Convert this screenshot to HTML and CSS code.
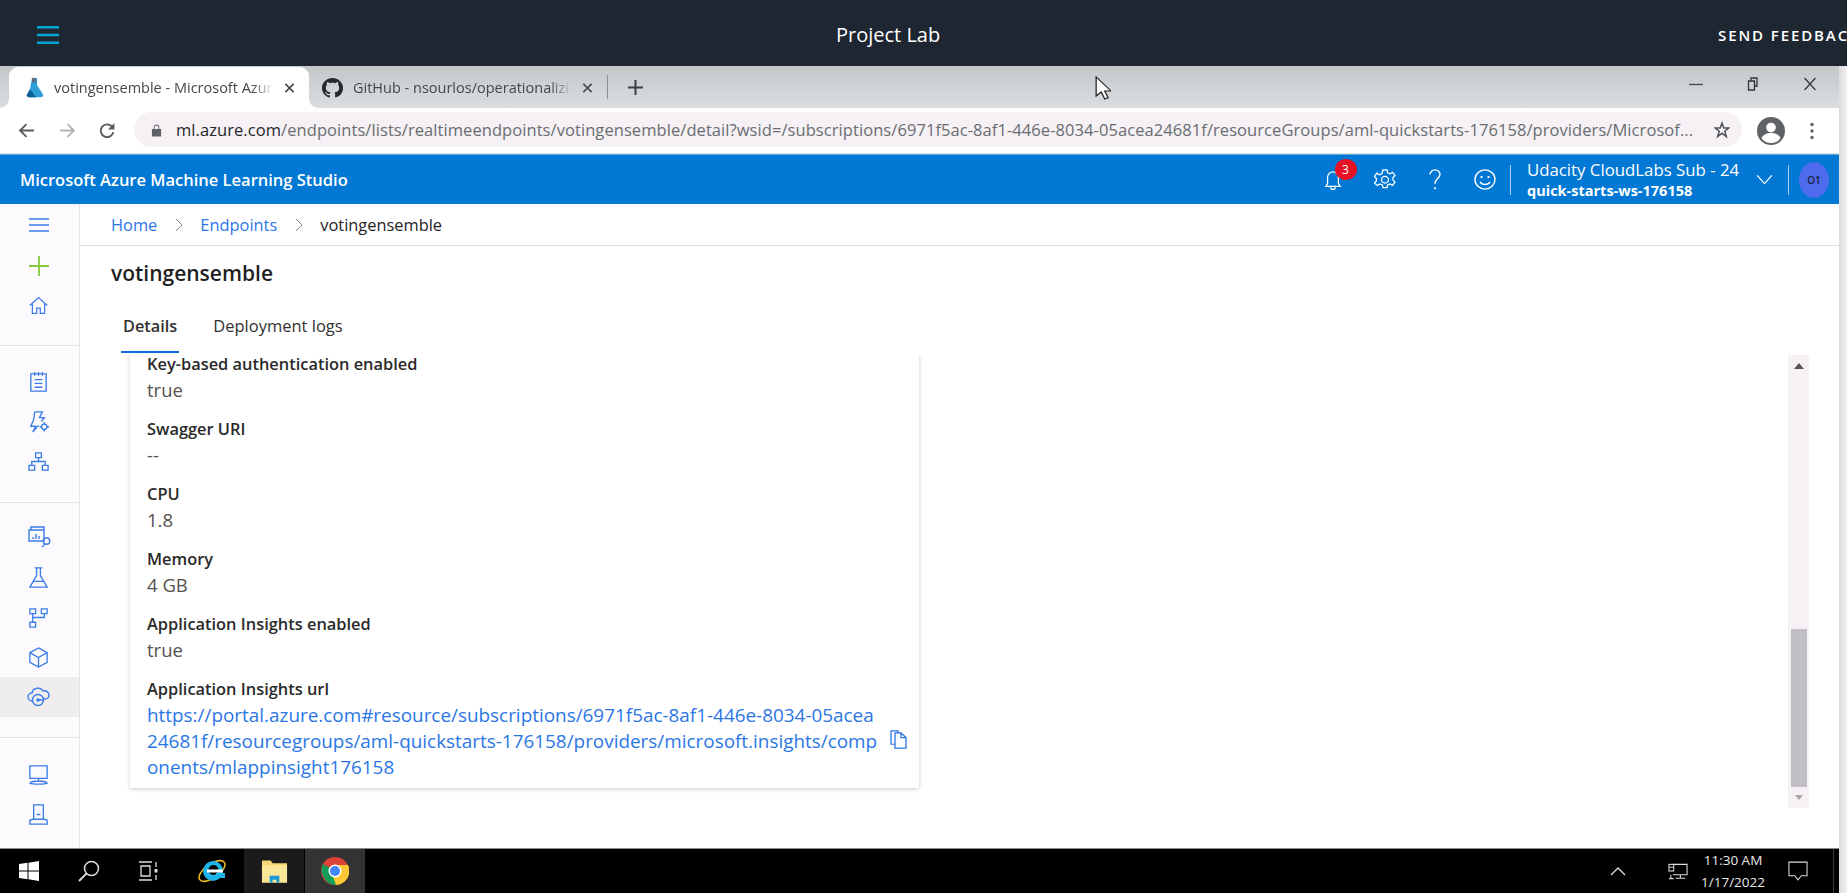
FILE: index.html
```html
<!DOCTYPE html>
<html lang="en">
<head>
<meta charset="utf-8">
<title>Project Lab</title>
<link rel="stylesheet" href="styles.css">
</head>
<body>
<div class="lab-bar">
  <svg class="lab-menu" viewBox="0 0 22 18" width="22" height="18"><path d="M0 1.2h22M0 9h22M0 16.800h22" stroke="#00a3d3" stroke-width="2.400" fill="none"/></svg>
  <div class="lab-title">Project Lab</div>
  <div class="lab-feedback">SEND FEEDBACK</div>
</div>
<div class="desk">
  <div class="screen">
    <div class="tabstrip">
      <div class="tab tab-active">
        <svg class="tab-icon" viewBox="0 0 20 24" width="20" height="21" preserveAspectRatio="none"><path d="M7 1h5v8l6 11a2 2 0 0 1-2 3H4a2 2 0 0 1-2-3l3-6z" fill="#2f9fd8"/><path d="M2 20l3-6 6 9H4a2 2 0 0 1-2-3z" fill="#0b5e96"/><path d="M7 1h4v5H7z" fill="#5a6f82"/></svg>
        <span class="tab-text">votingensemble - Microsoft Azure Machine</span>
        <svg class="tab-x" viewBox="0 0 12 12" width="11" height="12"><path d="M1.500 1.500l9 9M10.500 1.500l-9 9" stroke="#4a4d50" stroke-width="1.800"/></svg>
      </div>
      <div class="tab tab-second">
        <svg class="tab-icon" viewBox="0 0 16 16" width="21" height="20" preserveAspectRatio="none"><path fill="#24292e" d="M8 0C3.58 0 0 3.58 0 8c0 3.54 2.29 6.53 5.47 7.59.4.07.55-.17.55-.38 0-.19-.01-.82-.01-1.49-2.01.37-2.53-.49-2.69-.94-.09-.23-.48-.94-.82-1.13-.28-.15-.68-.52-.01-.53.63-.01 1.08.58 1.23.82.72 1.21 1.87.87 2.33.66.07-.52.28-.87.51-1.07-1.78-.2-3.64-.89-3.64-3.95 0-.87.31-1.59.82-2.15-.08-.2-.36-1.02.08-2.12 0 0 .67-.21 2.2.82.64-.18 1.32-.27 2-.27.68 0 1.36.09 2 .27 1.53-1.04 2.2-.82 2.2-.82.44 1.1.16 1.92.08 2.12.51.56.82 1.27.82 2.15 0 3.07-1.87 3.75-3.65 3.95.29.25.54.73.54 1.48 0 1.07-.01 1.93-.01 2.2 0 .21.15.46.55.38A8.013 8.013 0 0016 8c0-4.42-3.58-8-8-8z"/></svg>
        <span class="tab-text">GitHub - nsourlos/operationalizing-machine</span>
        <svg class="tab-x" viewBox="0 0 12 12" width="11" height="12"><path d="M1.500 1.500l9 9M10.500 1.500l-9 9" stroke="#4a4d50" stroke-width="1.800"/></svg>
      </div>
      <div class="tab-sep"></div>
      <svg class="tab-new" viewBox="0 0 14 14" width="15" height="15"><path d="M7 0v14M0 7h14" stroke="#3c4043" stroke-width="1.900"/></svg>
      <div class="win-controls">
        <svg viewBox="0 0 14 12" width="14" height="12"><path d="M0 6.500h14" stroke="#444" stroke-width="1.300"/></svg>
        <svg viewBox="0 0 12 14" width="12" height="14"><path d="M1.500 4h6v9h-6zM4 4V1h6v8H7.500" stroke="#333" stroke-width="1.300" fill="none"/></svg>
        <svg viewBox="0 0 14 14" width="14" height="14"><path d="M1.500 1l11 12M12.500 1l-11 12" stroke="#333" stroke-width="1.200"/></svg>
      </div>
    </div>
    <div class="toolbar">
      <svg class="nav-btn nav-back" viewBox="0 0 16 16" width="17" height="17"><path d="M15 8H2M8 2L2 8l6 6" stroke="#5a5d60" stroke-width="1.800" fill="none"/></svg>
      <svg class="nav-btn nav-fwd" viewBox="0 0 16 16" width="17" height="17"><path d="M1 8h13M8 2l6 6-6 6" stroke="#b1b3b6" stroke-width="1.800" fill="none"/></svg>
      <svg class="nav-btn nav-reload" viewBox="0 0 16 16" width="17" height="17"><path d="M13.500 9.500a6 6 0 1 1-1.600-5.500" stroke="#5a5d60" stroke-width="1.800" fill="none"/><path d="M14.500 1v6h-6z" fill="#5a5d60"/></svg>
      <div class="omnibox">
        <svg class="lock" viewBox="0 0 12 14" width="11" height="14"><path d="M1 6h10v8H1zM3 6V4a3 3 0 0 1 6 0v2" fill="#5f6368"/><path d="M4 6V4a2 2 0 0 1 4 0v2z" fill="#f5f1f5"/></svg>
        <span class="url"><b>ml.azure.com</b>/endpoints/lists/realtimeendpoints/votingensemble/detail?wsid=/subscriptions/6971f5ac-8af1-446e-8034-05acea24681f/resourceGroups/aml-quickstarts-176158/providers/Microsof...</span>
        <svg class="star" viewBox="0 0 16 18" width="16" height="18"><path d="M8 2l1.800 5h5l-4 3.200 1.500 5.300L8 12.300l-4.300 3.200 1.500-5.300-4-3.200h5z" stroke="#4f5255" stroke-width="1.500" fill="none"/></svg>
      </div>
      <svg class="profile" viewBox="0 0 28 28" width="28" height="28"><circle cx="14" cy="14" r="14" fill="#5f6368"/><circle cx="14" cy="10.500" r="4.800" fill="#fff"/><path d="M4.500 21c2-4 6-5 9.500-5s7.500 1 9.500 5c-2 3.500-5.500 5-9.500 5s-7.500-1.500-9.500-5z" fill="#fff"/></svg>
      <svg class="dots" viewBox="0 0 4 18" width="4" height="18"><circle cx="2" cy="2.500" r="1.700" fill="#5f6368"/><circle cx="2" cy="9" r="1.700" fill="#5f6368"/><circle cx="2" cy="15.500" r="1.700" fill="#5f6368"/></svg>
    </div>
    <header class="az-header">
      <div class="az-title">Microsoft Azure Machine Learning Studio</div>
      <div class="az-actions">
        <div class="bell">
          <svg viewBox="0 0 20 24" width="18" height="22"><path d="M10 3a6 6 0 0 0-6 6v7l-2 3h16l-2-3V9a6 6 0 0 0-6-6zM7.500 20a2.500 2.500 0 0 0 5 0" stroke="#fff" stroke-width="1.400" fill="none"/></svg>
          <span class="badge">3</span>
        </div>
        <svg class="gear" viewBox="1 1 22 22" width="22" height="21" preserveAspectRatio="none"><path d="M10 2h4l.6 3 2.400 1 2.600-1.600 2.400 3.400-2 2.200v2.600l2 2.200-2.400 3.400-2.600-1.600-2.400 1-.6 3h-4l-.6-3-2.400-1-2.600 1.600L1.400 15.800l2-2.200V11l-2-2.200L3.800 5.400 6.400 7l2.400-1z" stroke="#fff" stroke-width="1.300" fill="none"/><circle cx="12" cy="12.300" r="3.500" stroke="#fff" stroke-width="1.300" fill="none"/></svg>
        <svg class="help" viewBox="0 0 14 26" width="14" height="24" preserveAspectRatio="none"><path d="M2 7a5 5 0 0 1 10 0c0 4-5 4.500-5 10" stroke="#fff" stroke-width="1.400" fill="none"/><circle cx="7" cy="22" r="1.100" fill="#fff"/></svg>
        <svg class="smile" viewBox="1 1 22 22" width="22" height="21" preserveAspectRatio="none"><circle cx="12" cy="12" r="10" stroke="#fff" stroke-width="1.400" fill="none"/><circle cx="8.500" cy="9.500" r="1.200" fill="#fff"/><circle cx="15.500" cy="9.500" r="1.200" fill="#fff"/><path d="M7 14.500c2 3.500 8 3.500 10 0" stroke="#fff" stroke-width="1.400" fill="none"/></svg>
        <div class="az-sep"></div>
        <div class="account">
          <div class="account-sub">Udacity CloudLabs Sub - 24</div>
          <div class="account-ws">quick-starts-ws-176158</div>
        </div>
        <svg class="chev" viewBox="0 0 18 12" width="17" height="11"><path d="M1 1.500l8 9 8-9" stroke="#fff" stroke-width="1.400" fill="none"/></svg>
        <div class="az-sep az-sep-2"></div>
        <div class="avatar">O1</div>
      </div>
    </header>
    <div class="main">
      <nav class="sidebar">
        <div class="side-group side-group-1">
          <div class="side-item"><svg viewBox="0 0 24 24" width="24" height="24"><path d="M2 6h20M2 12h20M2 18h20" class="ic"/></svg></div>
          <div class="side-item"><svg viewBox="0 0 24 24" width="24" height="24"><path d="M12 2v20M2 12h20" fill="none" stroke="#86c83c" stroke-width="1.800"/></svg></div>
          <div class="side-item"><svg class="side-home" viewBox="0 0 24 24" width="21" height="21"><path d="M2 12l10-9 10 9M5 10v11h5v-6h4v6h5V10" class="ic"/></svg></div>
        </div>
        <div class="side-group side-group-2">
          <div class="side-item"><svg viewBox="0 0 24 24" width="23" height="23"><path d="M4 4h16v18H4zM8 2v4M12 2v4M16 2v4M8 10h8M8 14h8M8 18h8" class="ic"/></svg></div>
          <div class="side-item"><svg viewBox="0 0 24 24" width="23" height="23"><path d="M8 2h8l-3 6h5l-3 4M7 10l-3 7h5l-3 6 6-7M8 2l-1 8" class="ic"/><circle cx="18" cy="17.500" r="2.800" class="ic"/><path d="M18 12.500v2M18 20.500v2M13 17.500h2M21 17.500h2" class="ic"/></svg></div>
          <div class="side-item"><svg viewBox="0 0 24 24" width="23" height="23"><path d="M9 3h6v5H9zM2 16h6v5H2zM16 16h6v5h-6zM12 8v4M5 16v-4h14v4" class="ic"/></svg></div>
        </div>
        <div class="side-group side-group-3">
          <div class="side-item"><svg viewBox="0 0 24 24" width="24" height="24"><path d="M4 5V2h13v3M2 5h15v11H2zM6 12v2M9 9v5M12 11v3M15 22l3-3" class="ic"/><circle cx="19.500" cy="16" r="3.200" class="ic"/></svg></div>
          <div class="side-item"><svg viewBox="0 0 24 24" width="23" height="23"><path d="M8 2h8M10 2v8L3 22h18L14 10V2M6 16h12" class="ic"/></svg></div>
          <div class="side-item"><svg viewBox="0 0 24 24" width="23" height="23"><path d="M3 3h6v5H3zM15 3h6v5h-6zM3 17h6v5H3zM6 8v9M6 12h12V8" class="ic"/></svg></div>
          <div class="side-item"><svg viewBox="0 0 24 24" width="23" height="23"><path d="M12 2l9 5v10l-9 5-9-5V7zM3 7l9 5 9-5M12 12v10" class="ic"/></svg></div>
          <div class="side-item side-item-active"><svg viewBox="0 0 24 24" width="24" height="24"><path d="M6 16H5a4 4 0 0 1 0-8 6 6 0 0 1 11-2 4.500 4.500 0 0 1 6 4.500 4 4 0 0 1-4 3.500h-1" class="ic"/><circle cx="11" cy="15" r="5.500" class="ic"/><circle cx="11" cy="15" r="1.800" fill="#3a7de8"/><path d="M11 15h5" class="ic"/></svg></div>
        </div>
        <div class="side-group side-group-4">
          <div class="side-item"><svg viewBox="0 0 24 24" width="23" height="23"><path d="M3 3h18v13H3zM12 16v3M3 21c3-3 15-3 18 0-3 1.500-15 1.500-18 0z" class="ic"/></svg></div>
          <div class="side-item"><svg viewBox="0 0 24 24" width="23" height="23"><path d="M7 2h10v15H7zM10 12h4M3 22v-4l3-1h12l3 1v4z" class="ic"/></svg></div>
        </div>
      </nav>
      <main class="content">
        <div class="crumbs">
          <a class="crumb-link">Home</a>
          <svg class="crumb-chev" viewBox="0 0 8 14" width="8" height="14"><path d="M1 1l6 6-6 6" stroke="#8a8a8a" stroke-width="1" fill="none"/></svg>
          <a class="crumb-link">Endpoints</a>
          <svg class="crumb-chev" viewBox="0 0 8 14" width="8" height="14"><path d="M1 1l6 6-6 6" stroke="#8a8a8a" stroke-width="1" fill="none"/></svg>
          <span class="crumb-current">votingensemble</span>
        </div>
        <h1 class="page-title">votingensemble</h1>
        <div class="tabs">
          <div class="tabs-item tabs-item-active">Details</div>
          <div class="tabs-item">Deployment logs</div>
        </div>
        <div class="scroller">
          <div class="scroll-body">
            <section class="card">
              <div class="field"><div class="label">Key-based authentication enabled</div><div class="value">true</div></div>
              <div class="field"><div class="label">Swagger URI</div><div class="value">--</div></div>
              <div class="field"><div class="label">CPU</div><div class="value">1.8</div></div>
              <div class="field"><div class="label">Memory</div><div class="value">4 GB</div></div>
              <div class="field"><div class="label">Application Insights enabled</div><div class="value">true</div></div>
              <div class="field field-last"><div class="label">Application Insights url</div>
                <div class="link-row">
                  <a class="link">https://portal.azure.com#resource/subscriptions/6971f5ac-8af1-446e-8034-05acea<br>24681f/resourcegroups/aml-quickstarts-176158/providers/microsoft.insights/comp<br>onents/mlappinsight176158</a>
                  <svg class="copy" viewBox="0 0 18 20" width="18" height="19" preserveAspectRatio="none"><path d="M6 3h6l5 5v11H6zM12 3v5h5M6 15H2V1h7v2" stroke="#2b76e5" stroke-width="1.300" fill="none"/></svg>
                </div>
              </div>
            </section>
          </div>
          <div class="scrollbar">
            <div class="arrow-up"></div>
            <div class="thumb"></div>
            <div class="arrow-down"></div>
          </div>
        </div>
      </main>
    </div>
    <footer class="taskbar">
      <div class="task-cell task-win">
        <svg viewBox="0 0 20 20" width="20" height="20"><path d="M0 3l8.500-1.200V9.500H0zM9.500 1.700L20 0v9.500H9.500zM0 10.500h8.500v7.700L0 17zM9.500 10.500H20V20L9.500 18.300z" fill="#fff"/></svg>
      </div>
      <div class="task-cell task-search">
        <svg viewBox="0 0 22 22" width="22" height="22"><circle cx="13.500" cy="8.500" r="7" stroke="#ddd" stroke-width="1.500" fill="none"/><path d="M8.500 13.500L1 21" stroke="#ddd" stroke-width="1.800"/></svg>
      </div>
      <div class="task-cell task-view">
        <svg viewBox="0 0 22 20" width="22" height="20"><path d="M1 1h13M1 19h13M3 5h9v10H3zM18 1v5M18 14v5" stroke="#ddd" stroke-width="1.300" fill="none"/><rect x="16.500" y="8" width="3" height="3.500" fill="#ddd"/></svg>
      </div>
      <div class="task-cell task-ie">
        <svg viewBox="0 0 30 30" width="30" height="30"><ellipse cx="14" cy="15" rx="15" ry="7" transform="rotate(-35 14 15)" fill="none" stroke="#e8b923" stroke-width="1.600"/><circle cx="15" cy="15" r="10" fill="#1fb4e8"/><circle cx="15.500" cy="14" r="5" fill="#000"/><rect x="9" y="13.500" width="16" height="3" fill="#fff"/><rect x="18" y="17" width="9" height="5" fill="#1fb4e8"/></svg>
      </div>
      <div class="task-cell task-cell-open">
        <svg viewBox="0 0 28 24" width="27" height="24"><path d="M1 1h9l2 3h15v20H1z" fill="#f7d774"/><path d="M1 6h26v18H1z" fill="#fbe69a"/><path d="M9 24v-7h10v7h-3v-3h-4v3z" fill="#1a9ad6"/></svg>
      </div>
      <div class="task-cell task-cell-active">
        <svg viewBox="0 0 28 28" width="28" height="28"><circle cx="14" cy="14" r="14" fill="#db4437"/><path d="M14 14L3 21A14 14 0 0 1 2 7z" fill="#0f9d58"/><path d="M14 14L3 21a14 14 0 0 0 12 7z" fill="#0f9d58"/><path d="M14 8h13a14 14 0 0 1-12 20l-3-8z" fill="#fcc934"/><circle cx="14" cy="14" r="6.500" fill="#fff"/><circle cx="14" cy="14" r="5" fill="#4285f4"/></svg>
      </div>
      <div class="tray">
        <svg class="tray-chev" viewBox="0 0 16 10" width="16" height="10"><path d="M1 9l7-7 7 7" stroke="#ddd" stroke-width="1.300" fill="none"/></svg>
        <svg class="tray-net" viewBox="0 0 21 17" width="20" height="17"><path d="M5 1h15v11H5M8 12h1M13 12v3M8 15.500h10M3 12v4M1 16h5" stroke="#ddd" stroke-width="1.100" fill="none"/><rect x="1" y="1" width="5" height="7" stroke="#ddd" stroke-width="1.100" fill="#000"/><path d="M1 4h5" stroke="#ddd"/></svg>
        <div class="clock"><div>11:30 AM</div><div>1/17/2022</div></div>
        <svg class="tray-msg" viewBox="0 0 21 19" width="20" height="20" preserveAspectRatio="none"><path d="M1 1h19v13h-6l-3.500 4L7 14H1z" stroke="#ddd" stroke-width="1.100" fill="none"/></svg>
        <div class="tray-edge"></div>
      </div>
    </footer>
    <svg class="cursor" viewBox="0 0 14 24" width="16" height="24" preserveAspectRatio="none"><path d="M1 1v19l4.500-4 3 7 3-1.300-3-6.700H14z" fill="#fff" stroke="#222" stroke-width="1.100"/></svg>
  </div>
  <div class="rail"></div>
</div>
</body>
</html>
```
FILE: styles.css
```css
* { box-sizing: border-box; }
html, body { margin: 0; padding: 0; height: 100%; overflow: hidden; background: #fff; }
body { font-family: "Open Sans", "Noto Sans", sans-serif; color: #323130; width: 1847px; height: 893px; }

.lab-bar { height: 66px; background: #1e2731; display: flex; align-items: center; padding: 4px 0 0 37px; overflow: hidden; }
.lab-menu { flex: none; }
.lab-title { flex: none; width: 104px; margin: -2px 0 0 777px; color: #fff; font-size: 20px; white-space: nowrap; }
.lab-feedback { flex: none; margin-left: 778px; color: #fff; font-size: 15px; font-weight: 600; letter-spacing: 1.900px; white-space: nowrap; }

.desk { display: flex; height: 827px; }
.screen { position: relative; width: 1839px; flex: none; display: flex; flex-direction: column; }
.rail { flex: 1; background: linear-gradient(90deg, #dcdcdc, #f3f3f3); }

.tabstrip { height: 42px; background: linear-gradient(#c3c7ca, #dbdee1); display: flex; align-items: center; padding-left: 9px; }
.tab { position: relative; width: 300px; height: 41px; margin-top: 1px; display: flex; align-items: center; padding: 0 14.500px 0 16px; flex: none; }
.tab-second { width: 298px; padding: 0 14px 0 13px; }
.tab-active { background: #fff; border-radius: 9px 9px 0 0; }
.tab-active::before, .tab-active::after { content: ""; position: absolute; bottom: 0; width: 9px; height: 9px; }
.tab-active::before { left: -9px; background: radial-gradient(circle at 0 0, transparent 8.500px, #fff 9px); }
.tab-active::after { right: -9px; background: radial-gradient(circle at 100% 0, transparent 8.500px, #fff 9px); }
.tab-icon { flex: none; margin-right: 9px; }
.tab-second .tab-icon { margin-right: 10px; }
.tab-text { flex: 1; min-width: 0; font-size: 14.500px; color: #45484b; white-space: nowrap; overflow: hidden; -webkit-mask-image: linear-gradient(90deg, #000 90%, transparent); mask-image: linear-gradient(90deg, #000 90%, transparent); }
.tab-x { flex: none; margin-left: 10px; }
.tab-sep { width: 1px; height: 24px; background: #8b8e91; flex: none; }
.tab-new { flex: none; margin-left: 20px; }
.win-controls { margin-left: auto; display: flex; align-items: center; gap: 44px; padding: 0 22px 6px 0; }

.toolbar { height: 46px; background: #fff; display: flex; align-items: center; padding-left: 18px; border-bottom: 1px solid #e4e4e4; }
.nav-btn { flex: none; }
.nav-back { margin-right: 24px; }
.nav-fwd { margin-right: 23px; }
.nav-reload { margin-right: 18px; }
.omnibox { width: 1608px; height: 35px; margin-bottom: 2px; flex: none; background: #f5f1f5; border-radius: 18px; display: flex; align-items: center; padding-left: 17px; }
.lock { flex: none; }
.url { margin-left: 14px; width: 1520px; flex: none; font-size: 16.500px; letter-spacing: 0.07px; color: #6a6d70; white-space: nowrap; overflow: hidden; }
.url b { font-weight: 400; color: #25282b; }
.star { flex: none; margin-left: 18px; }
.profile { flex: none; margin-left: 15px; }
.dots { flex: none; margin-left: 25px; }

.az-header { height: 50px; background: #0078d4; display: flex; align-items: center; padding: 0 10px 0 20px; color: #fff; border-top: 1px solid #5ea9e2; }
.az-title { font-size: 16.500px; font-weight: 600; white-space: nowrap; }
.az-actions { margin-left: auto; display: flex; align-items: center; }
.bell { position: relative; display: flex; margin-right: 32px; }
.badge { position: absolute; left: 11px; top: -10px; width: 22px; height: 21px; border-radius: 50%; background: #e81123; font-size: 12px; line-height: 21px; text-align: center; color: #fff; }
.gear { margin-right: 32px; }
.help { margin-right: 32px; }
.smile { margin-right: 14px; }
.az-sep { width: 1px; height: 30px; background: #a9cfef; }
.account { margin-left: 16.500px; width: 228.500px; }
.account-sub { font-size: 16.800px; line-height: 21px; white-space: nowrap; }
.account-ws { font-size: 14.500px; font-weight: 700; line-height: 21px; white-space: nowrap; }
.chev { margin-right: 15.500px; }
.az-sep-2 { margin-right: 10px; }
.avatar { width: 30px; height: 36px; border-radius: 50%; background: #4f6bed; color: #16233f; font-size: 10px; line-height: 36px; text-align: center; font-weight: 600; }

.main { flex: 1; min-height: 0; display: flex; }
.sidebar { width: 80px; flex: none; background: #fdfafd; border-right: 1px solid #e6e3e6; }
.side-group { border-bottom: 1px solid #e6e3e6; }
.side-group-1 { padding-bottom: 18px; }
.side-group-2 { padding: 15px 0 21px; }
.side-group-3 { padding: 14px 0 20px; }
.side-group-4 { padding-top: 16px; border-bottom: 0; }
.side-group-1 .side-item { height: 41px; }
.side-item { height: 40px; display: flex; align-items: center; justify-content: center; padding-right: 2px; }
.side-item-active { background: #efeded; }
.side-home { margin-bottom: 2px; }
.ic { fill: none; stroke: #3a7de8; stroke-width: 1.400; }

.content { flex: 1; min-width: 0; display: flex; flex-direction: column; }
.crumbs { height: 42px; flex: none; display: flex; align-items: center; padding-left: 31px; font-size: 16.400px; border-bottom: 1px solid #dcdcdc; }
.crumb-link { color: #2b76e5; }
.crumb-chev { margin: 0 17.500px; flex: none; }
.crumb-current { color: #242424; }
.page-title { margin: 0; padding: 13px 0 0 31px; height: 54px; font-size: 21px; font-weight: 600; color: #1f1f1f; line-height: 28px; }
.tabs { height: 55px; flex: none; display: flex; padding-left: 41px; gap: 32px; }
.tabs-item { height: 53px; padding: 14px 2px 0; font-size: 16.500px; line-height: 24px; color: #323130; white-space: nowrap; }
.tabs-item-active { font-weight: 600; font-size: 16.300px; border-bottom: 2.500px solid #0f6cde; }

.scroller { flex: none; height: 453px; display: flex; }
.scroll-body { width: 1708px; flex: none; padding-left: 50px; overflow: hidden; }
.card { width: 789px; background: #fff; padding: 0 17px; margin-top: -4px; height: 437px; box-shadow: 0 1px 4px rgba(0,0,0,.22); }
.field { height: 65px; }
.label { font-size: 16.400px; font-weight: 600; line-height: 26px; color: #2a2a2a; white-space: nowrap; }
.value { font-size: 18.500px; line-height: 26px; color: #55524f; }
.link-row { position: relative; display: flex; }
.link { font-size: 18.900px; line-height: 26px; color: #2b76e5; white-space: nowrap; }
.copy { position: absolute; left: 742px; top: 28px; }

.scrollbar { width: 21px; flex: none; background: #f5f1f5; display: flex; flex-direction: column; align-items: center; }
.arrow-up { width: 0; height: 0; margin-top: 8px; border: 5px solid transparent; border-top: 0; border-bottom: 6px solid #555; }
.thumb { width: 16px; height: 158px; margin-top: 260px; background: #c1bfc3; }
.arrow-down { width: 0; height: 0; margin-top: 8px; border: 4px solid transparent; border-bottom: 0; border-top: 5px solid #a8a6aa; }

.taskbar { height: 45px; flex: none; background: #000; border-top: 1px solid #8a8a8a; display: flex; align-items: stretch; color: #e8e8e8; }
.task-cell { width: 60px; flex: none; display: flex; align-items: center; justify-content: center; }
.task-win { width: 58px; }
.task-search { width: 62px; }
.task-view { width: 58px; }
.task-ie { width: 66px; padding-left: 4px; }
.task-cell-open { background: #1b1b1b; border-right: 1px solid #000; width: 61px; }
.task-cell-active { background: #333; }
.tray { margin-left: auto; display: flex; align-items: center; }
.tray-chev { margin-right: 42px; }
.tray-net { margin-right: 10px; }
.clock { width: 70px; font-size: 13.500px; line-height: 22px; text-align: center; white-space: nowrap; }
.tray-msg { margin-left: 20px; }
.tray-edge { width: 1px; height: 44px; background: #3a3a3a; margin-left: 25px; margin-right: 5px; }

.cursor { position: absolute; left: 1095px; top: 10px; }
```
